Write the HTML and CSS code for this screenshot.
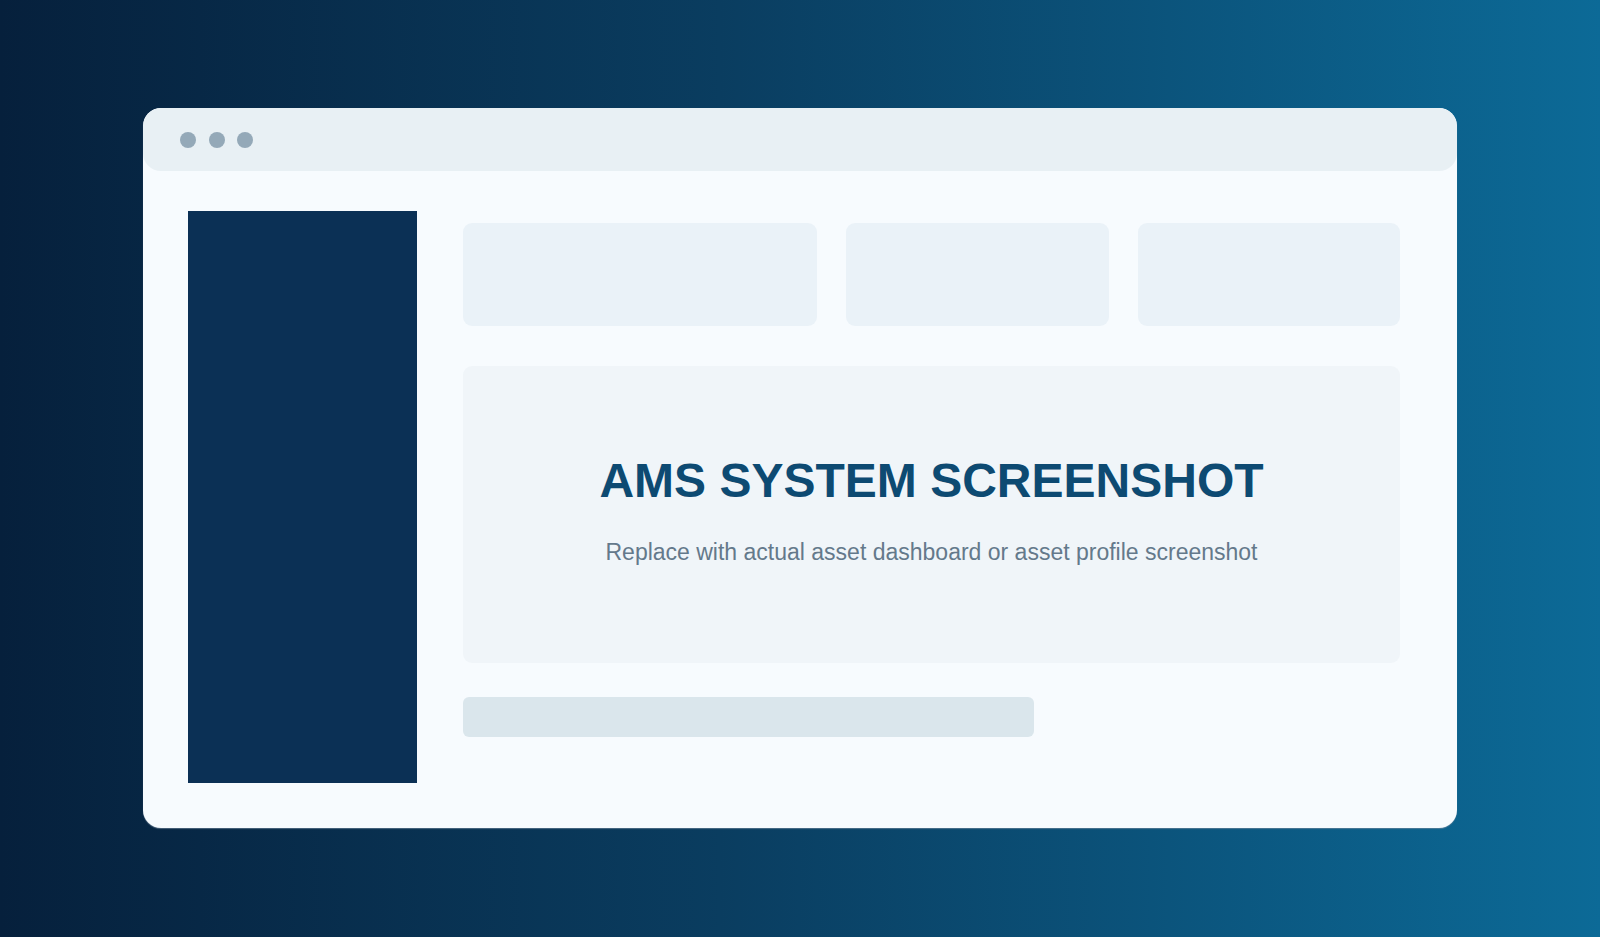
FILE: index.html
```html
<!DOCTYPE html>
<html lang="en">
<head>
<meta charset="utf-8" />
<title>AMS System Screenshot</title>
<link rel="stylesheet" href="styles.css">
</head>
<body>
  <div class="window">
    <div class="titlebar">
      <span class="dot"></span>
      <span class="dot"></span>
      <span class="dot"></span>
    </div>
    <div class="content">
      <div class="sidebar"></div>
      <div class="main">
        <div class="cards">
          <div class="card"></div>
          <div class="card"></div>
          <div class="card"></div>
        </div>
        <div class="panel">
          <h1 class="title">AMS SYSTEM SCREENSHOT</h1>
          <p class="subtitle">Replace with actual asset dashboard or asset profile screenshot</p>
        </div>
        <div class="bar"></div>
      </div>
    </div>
  </div>
</body>
</html>
```

FILE: styles.css
```css
html, body
{
	margin: 0;
	padding: 0;
}

body
{
	width: 1600px;
	height: 937px;
	padding: 108px 0 0 143px;
	box-sizing: border-box;
	overflow: hidden;
	background: linear-gradient(90deg, #06203c 0%, #0a3d60 45%, #0c6a97 100%);
	font-family: "Liberation Sans", Arial, sans-serif;
}

.window
{
	width: 1314px;
	height: 720px;
	border-radius: 18px;
	background: #f7fbfe;
	box-shadow: 0 1px 1px rgba(120, 140, 160, 0.6);
	overflow: hidden;
}

.titlebar
{
	height: 63px;
	display: flex;
	align-items: center;
	gap: 12.5px;
	padding-left: 37px;
	border-radius: 18px;
	background: #e8f0f4;
}

.dot
{
	width: 16px;
	height: 16px;
	border-radius: 50%;
	background: #94a9b8;
}

.content
{
	display: flex;
	gap: 46px;
	padding: 40px 57px 45px 45px;
}

.sidebar
{
	width: 229px;
	height: 572px;
	flex: none;
	background: #0b3055;
}

.main
{
	flex: 1;
	display: flex;
	flex-direction: column;
}

.cards
{
	display: grid;
	grid-template-columns: 354px 1fr 1fr;
	gap: 29px;
	margin-top: 12px;
}

.card
{
	height: 103px;
	border-radius: 9px;
	background: #eaf2f8;
}

.panel
{
	height: 297px;
	margin-top: 40px;
	padding-bottom: 10px;
	box-sizing: border-box;
	border-radius: 9px;
	background: #f0f5f9;
	display: flex;
	flex-direction: column;
	justify-content: center;
	align-items: center;
	text-align: center;
}

.title
{
	margin: 0;
	font-size: 48px;
	line-height: 56px;
	font-weight: bold;
	color: #0d4a72;
}

.subtitle
{
	margin: 29px 0 0;
	font-size: 23px;
	line-height: 28px;
	color: #64798b;
}

.bar
{
	width: 571px;
	height: 40px;
	margin-top: 34px;
	border-radius: 6px;
	background: #dae6ec;
}
```
